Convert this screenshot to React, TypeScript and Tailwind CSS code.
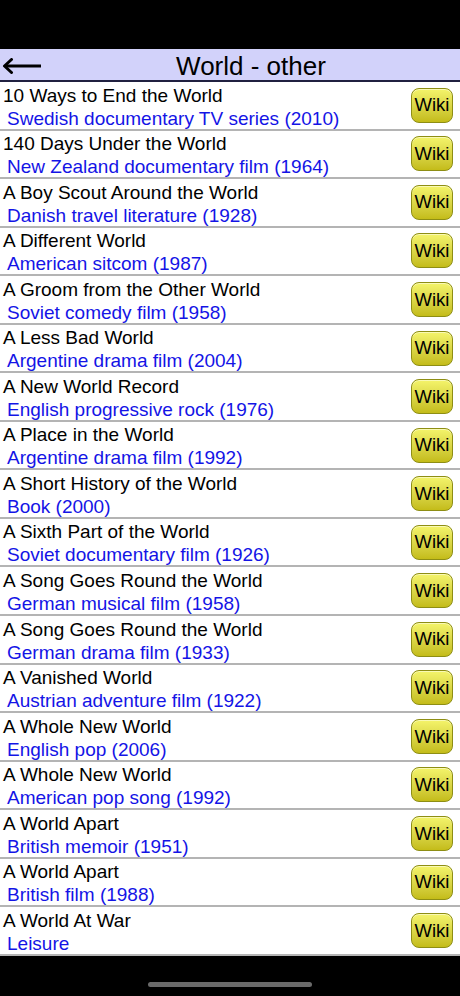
import React from "react";

const items: [string, string][] = [
  ["10 Ways to End the World", "Swedish documentary TV series (2010)"],
  ["140 Days Under the World", "New Zealand documentary film (1964)"],
  ["A Boy Scout Around the World", "Danish travel literature (1928)"],
  ["A Different World", "American sitcom (1987)"],
  ["A Groom from the Other World", "Soviet comedy film (1958)"],
  ["A Less Bad World", "Argentine drama film (2004)"],
  ["A New World Record", "English progressive rock (1976)"],
  ["A Place in the World", "Argentine drama film (1992)"],
  ["A Short History of the World", "Book (2000)"],
  ["A Sixth Part of the World", "Soviet documentary film (1926)"],
  ["A Song Goes Round the World", "German musical film (1958)"],
  ["A Song Goes Round the World", "German drama film (1933)"],
  ["A Vanished World", "Austrian adventure film (1922)"],
  ["A Whole New World", "English pop (2006)"],
  ["A Whole New World", "American pop song (1992)"],
  ["A World Apart", "British memoir (1951)"],
  ["A World Apart", "British film (1988)"],
  ["A World At War", "Leisure"],
];

export default function App() {
  return (
    <div
      className="w-[460px] h-[996px] bg-black flex flex-col overflow-hidden"
      style={{ fontFamily: '"Liberation Sans", Arial, sans-serif' }}
    >
      <div className="h-[49px] shrink-0 bg-black" />
      <div className="h-[33px] shrink-0 bg-[#d2d2fa] border-b-2 border-[#202040] flex items-center">
        <div className="w-[42px] h-full flex items-center pl-[2px] pt-[2px]">
          <svg width="40" height="16" viewBox="0 0 40 16">
            <path d="M3 8 H39" stroke="#000" strokeWidth="3" fill="none" />
            <path d="M9.5 1.5 L2.5 8 L9.5 14.5" stroke="#000" strokeWidth="3" fill="none" strokeLinecap="round" strokeLinejoin="round" />
          </svg>
        </div>
        <div className="flex-1 text-center text-[26px] text-black leading-none pt-[3px]">World - other</div>
      </div>
      <div className="bg-white flex flex-col">
        {items.map(([t, s], i) => (
          <div
            key={i}
            className="h-[48.55px] shrink-0 border-b-2 border-[#b4b4b4] flex items-center"
          >
            <div className="flex-1 flex flex-col self-start pt-[1.5px] pl-[3px]">
              <div className="text-[19px] leading-[23px] text-black">{t}</div>
              <div className="text-[19px] leading-[23px] text-[#1414e6] pl-[4px]">{s}</div>
            </div>
            <div className="mr-[7px] w-[42px] h-[35px] rounded-[8px] border border-[#8e8e14] bg-gradient-to-b from-[#f4f46a] to-[#c4bc18] flex items-center justify-center text-[18.5px] text-black shadow-[inset_0_1px_0_rgba(255,255,255,0.5)]">
              Wiki
            </div>
          </div>
        ))}
      </div>
      <div className="flex-1 bg-black flex items-end justify-center pb-[9px]">
        <div className="w-[164px] h-[5px] rounded-full bg-[#6a6a6a]" />
      </div>
    </div>
  );
}
